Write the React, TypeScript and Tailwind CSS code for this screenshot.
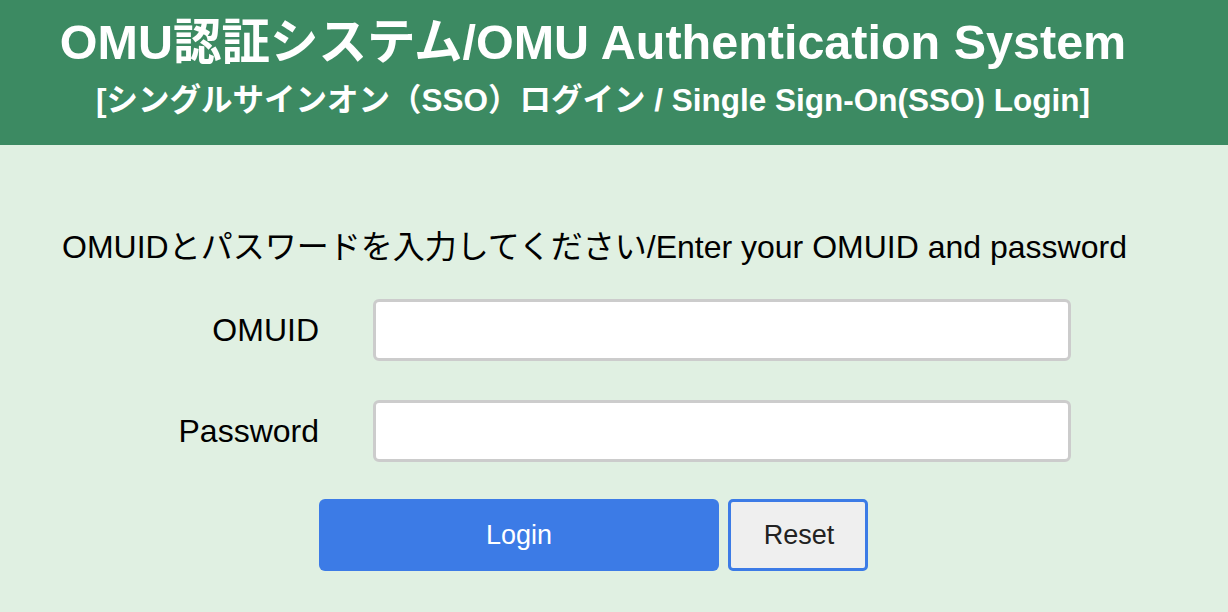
export default function App() {
  return (
    <div
      className="min-h-[612px] bg-[#e0f0e2] text-black"
      style={{ fontFamily: '"Liberation Sans", "Noto Sans CJK JP", sans-serif' }}
    >
      <div className="h-[145px] bg-[#3c8a62] text-white">
        <div className="w-[1186px] flex flex-col items-center pt-[14px]">
          <h1 className="text-[48.5px] leading-[56px] font-bold whitespace-nowrap">
            OMU認証システム/OMU Authentication System
          </h1>
          <p className="text-[31.5px] leading-[38px] font-bold mt-[11px] whitespace-nowrap">
            [シングルサインオン（SSO）ログイン / Single Sign-On(SSO) Login]
          </p>
        </div>
      </div>

      <div className="pl-[62px] pt-[83px]">
        <p className="text-[32px] leading-[38px] whitespace-nowrap">
          OMUIDとパスワードを入力してください/Enter your OMUID and password
        </p>
      </div>

      <form className="mt-[33px] flex flex-col gap-[39px]">
        <div className="flex items-center">
          <label className="w-[319px] text-right text-[32px]">OMUID</label>
          <input
            type="text"
            className="ml-[54px] w-[698px] h-[62px] bg-white border-[3px] border-[#cccccc] rounded-[6px] outline-none px-2 text-[24px]"
          />
        </div>
        <div className="flex items-center">
          <label className="w-[319px] text-right text-[32px]">Password</label>
          <input
            type="password"
            className="ml-[54px] w-[698px] h-[62px] bg-white border-[3px] border-[#cccccc] rounded-[6px] outline-none px-2 text-[24px]"
          />
        </div>
        <div className="flex pl-[319px] gap-[9px] mt-[-2px]">
          <button
            type="button"
            className="w-[400px] h-[72px] bg-[#3c7be6] text-white text-[27px] rounded-[6px]"
          >
            Login
          </button>
          <button
            type="button"
            className="w-[140px] h-[72px] bg-[#efefef] text-[#222] text-[27px] rounded-[5px] border-[3px] border-[#3c7be6] pl-[2px]"
          >
            Reset
          </button>
        </div>
      </form>
    </div>
  );
}
